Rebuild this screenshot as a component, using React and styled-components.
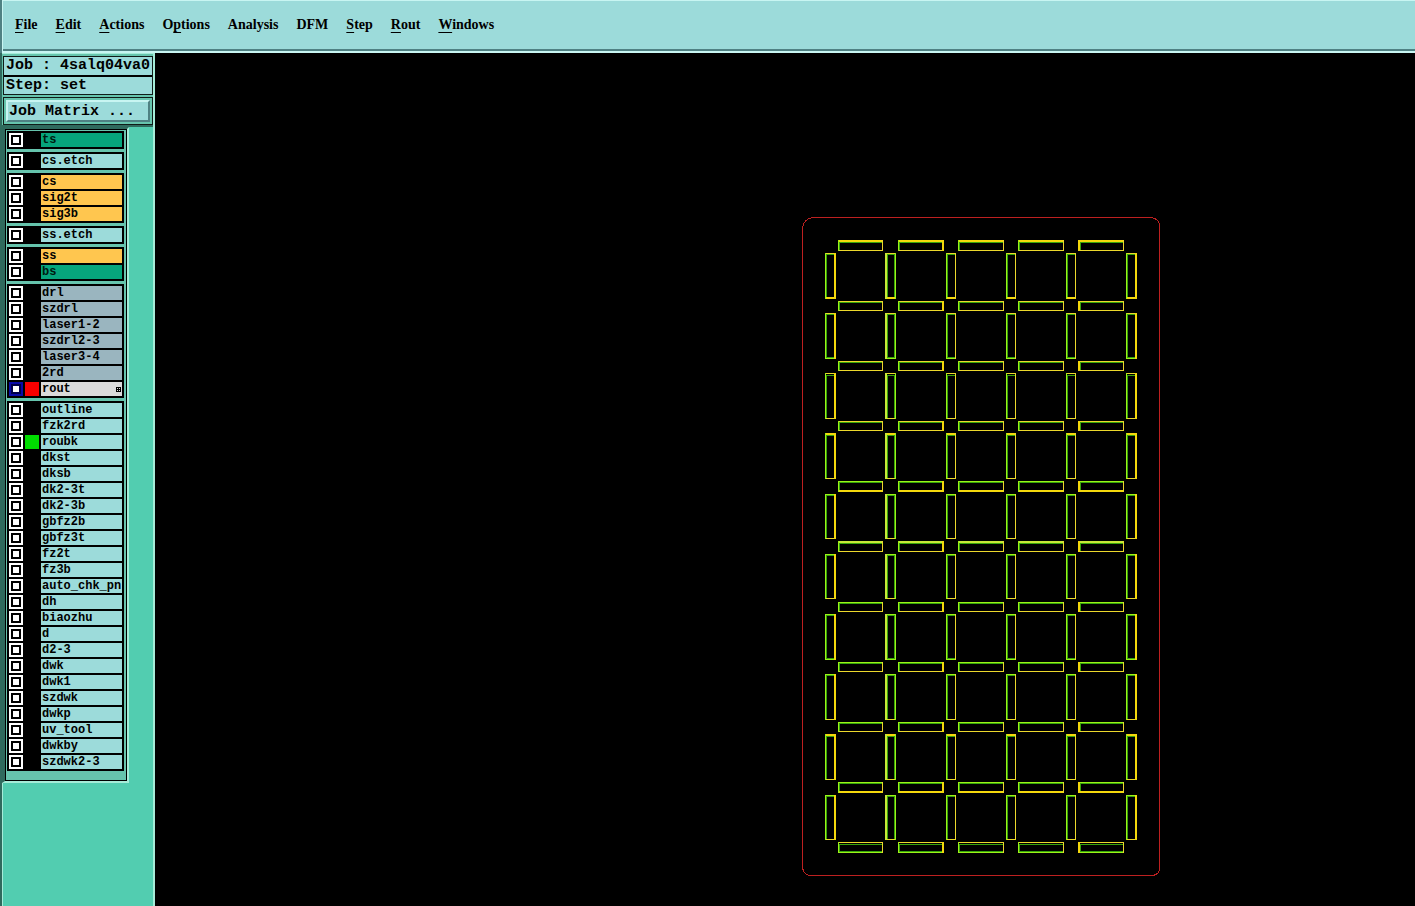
import React from "react";
import styled, { createGlobalStyle } from "styled-components";

const C = {
  aqua: "#9cdbda",
  light: "#c8f5f2",
  shade: "#4f8183",
  teal: "#52cdb0",
  tealLight: "#a5ecd8",
  tealFrame: "#66c4ad",
  tealDark: "#2f6a5d",
};

const GlobalStyle = createGlobalStyle`
  *, *::before { box-sizing: border-box; }
  body { margin: 0; background: #000; color: #000; }
  button, input { font: inherit; color: inherit; margin: 0; }
`;

const Page = styled.div`
  min-height: 100vh;
  display: flex;
  flex-direction: column;
`;

const MenuBar = styled.nav`
  display: flex;
  align-items: flex-start;
  gap: 18px;
  height: 53px;
  margin-left: 2px;
  padding: 15px 12px 0 12px;
  background: ${C.aqua};
  border-top: 1px solid ${C.light};
  border-left: 1px solid ${C.light};
  border-bottom: 2px solid ${C.light};
  box-shadow: inset 0 -2px ${C.shade}, -2px 0 ${C.shade};
`;

const MenuItem = styled.button`
  padding: 0;
  border: 0;
  background: none;
  font: bold 14px/17px "Liberation Serif", serif;
  white-space: nowrap;

  u {
    text-decoration-thickness: 1px;
    text-underline-offset: 3px;
    text-decoration-skip-ink: none;
  }
`;

const Workspace = styled.div`
  flex: 1;
  display: flex;
  align-items: stretch;
`;

const Sidebar = styled.aside`
  flex: none;
  width: 155px;
  background: ${C.teal};
  border-left: 2px solid ${C.tealDark};
  border-right: 2px solid ${C.tealLight};
  box-shadow: inset 1px 0 ${C.tealLight};
`;

const JobPanel = styled.header`
  height: 74px;
  padding: 2px 0 0 1px;
  background: ${C.tealFrame};
  border-top: 1px solid ${C.tealLight};
  border-bottom: 2px solid ${C.tealDark};
  font: bold 15px/18px "Liberation Mono", monospace;
  white-space: pre;
`;

const JobInfo = styled.dl`
  margin: 0 0 2px;
  background: ${C.aqua};
  border: 1px solid #101c18;
`;

const JobLine = styled.div`
  display: flex;
  height: 18px;
  padding-left: 2px;

  & + & {
    height: 19px;
    border-top: 2px solid #000;
  }

  dt, dd {
    margin: 0;
  }
`;

const ButtonFrame = styled.div`
  padding: 2px;
  border: 1px solid #101c18;
`;

const MatrixButton = styled.button`
  display: block;
  width: 100%;
  height: 22px;
  padding: 1px 1px 0;
  text-align: left;
  background: ${C.aqua};
  border: 2px solid;
  border-color: ${C.light} ${C.shade} ${C.shade} ${C.light};
`;

const LayerPanel = styled.section`
  width: 127px;
  border-left: 3px solid ${C.tealDark};
  border-top: 2px solid ${C.tealDark};
  border-right: 2px solid ${C.tealLight};
  border-bottom: 2px solid ${C.tealLight};
`;

const LayerFrame = styled.div`
  display: flex;
  flex-direction: column;
  gap: 3px;
  padding: 1px 2px 9px 1px;
  background: ${C.tealFrame};
  border: 1px solid #000;
`;

const LayerGroup = styled.ul`
  display: flex;
  flex-direction: column;
  gap: 2px;
  margin: 0;
  padding: 2px;
  list-style: none;
  background: #000;
`;

const LayerRow = styled.li`
  display: flex;
  gap: 2px;
  height: 14px;
`;

const LayerToggle = styled.input`
  appearance: none;
  flex: none;
  display: grid;
  place-items: center;
  width: 14px;
  height: 14px;
  background: #fff;

  &::before {
    content: "";
    width: 10px;
    height: 10px;
    background: #fff;
    border: 2px solid #000;
  }

  &:checked {
    background: #0a0aa8;
  }

  &:checked::before {
    border-color: #00004a;
  }
`;

const Swatch = styled.span`
  flex: none;
  width: 14px;
  background: ${(p) => p.$color || "#000"};
`;

const tones = {
  mask: "#06a57c",
  board: C.aqua,
  signal: "#ffc64f",
  drill: "#9ab5bf",
  active: "#dadada",
};

const LayerName = styled.label`
  flex: 1;
  min-width: 0;
  display: flex;
  align-items: center;
  justify-content: space-between;
  padding: 0 1px;
  overflow: hidden;
  background: ${(p) => tones[p.$tone]};
  color: ${(p) => (p.$tone === "mask" ? "#001a10" : "#000")};
  font: bold 12px/14px "Liberation Mono", monospace;
  white-space: nowrap;
`;

const Canvas = styled.main`
  flex: 1;
  min-width: 0;
  background: #000;

  svg {
    display: block;
    width: 100%;
    height: auto;
  }
`;

const menus = [
  ["", "F", "ile"],
  ["", "E", "dit"],
  ["", "A", "ctions"],
  ["O", "p", "tions"],
  ["Analysis"],
  ["DFM"],
  ["", "S", "tep"],
  ["", "R", "out"],
  ["", "W", "indows"],
];

const groups = [
  [["ts", "mask"]],
  [["cs.etch", "board"]],
  [["cs", "signal"], ["sig2t", "signal"], ["sig3b", "signal"]],
  [["ss.etch", "board"]],
  [["ss", "signal"], ["bs", "mask"]],
  [
    ["drl", "drill"],
    ["szdrl", "drill"],
    ["laser1-2", "drill"],
    ["szdrl2-3", "drill"],
    ["laser3-4", "drill"],
    ["2rd", "drill"],
    ["rout", "active", "#f80000"],
  ],
  [
    "outline", "fzk2rd", "roubk", "dkst", "dksb", "dk2-3t", "dk2-3b", "gbfz2b",
    "gbfz3t", "fz2t", "fz3b", "auto_chk_pnl", "dh", "biaozhu", "d", "d2-3",
    "dwk", "dwk1", "szdwk", "dwkp", "uv_tool", "dwkby", "szdwk2-3",
  ].map((n) => [n, "board", n === "roubk" ? "#00dd00" : undefined]),
];

const YELLOW = "#ecd82c";
const GOLD = "#f4d80c";
const LIME = "#9cf218";
const PALE = "#c8e838";
const GREEN = "#38a40a";

// Slots between the boards: [start, length, style of the first edge, style of the last edge]
const barCols = [
  [838, 45], [898, 46, "", "gold"], [958, 46], [1018, 46], [1078, 46, "gold", ""],
];
const barRows = [
  [240, 11, "gold"], [301, 10], [361, 10], [421, 10], [481, 11, "lime", "gold"],
  [541, 11, "pale"], [602, 10, "lime"], [662, 10, "lime"], [722, 10, "lime"],
  [782, 11, "lime", "gold"], [842, 11, "split", "green"],
];
const postCols = [
  [825, 11, "", "gold"], [885, 11, "pale", "lime"], [946, 10], [1006, 10],
  [1066, 10], [1126, 11, "", "gold"],
];
const postRows = [
  [253, 46, "", "gold"], [313, 46, "", "green"], [373, 46, "split"],
  [433, 46, "gold"], [494, 45, "lime"], [554, 45, "lime"],
  [614, 46, "lime", "green"], [674, 46, "lime"], [734, 46, "gold"], [795, 45, "lime"],
];

function Slot({ col, row }) {
  const [x, w, left, right] = col;
  const [y, h, top, bottom] = row;
  const r = x + w;
  const b = y + h;
  const wide = (s) => s === "gold" || s === "pale";
  const tint = (s) =>
    s === "gold" ? GOLD : s === "pale" ? PALE : s === "lime" || s === "green" ? LIME : YELLOW;
  const topEdge = wide(top) ? 2 : 1;
  const leftEdge = wide(left) ? 2 : 1;
  const innerTop = top === "split" ? y + 2 : y + topEdge;
  return (
    <g>
      <rect x={x + leftEdge} y={innerTop} width={w - leftEdge - 1} height="1" fill={GREEN} />
      <rect x={x + leftEdge} y={innerTop} width="1" height={b - innerTop - 1} fill={GREEN} />
      {right === "lime" && (
        <rect x={r - 2} y={innerTop} width="1" height={b - innerTop - 1} fill={GREEN} />
      )}
      {bottom === "green" && (
        <rect x={x + 1} y={b - 2} width={w - 2} height="1" fill={GREEN} />
      )}
      <rect x={x} y={y} width={w} height={topEdge} fill={tint(top)} />
      <rect x={x} y={b - (bottom === "gold" ? 2 : 1)} width={w} height={bottom === "gold" ? 2 : 1} fill={tint(bottom)} />
      <rect x={x} y={y} width={leftEdge} height={h} fill={left ? tint(left) : LIME} />
      <rect x={r - (right === "gold" ? 2 : 1)} y={y} width={right === "gold" ? 2 : 1} height={h} fill={tint(right)} />
    </g>
  );
}

function BoardDrawing() {
  return (
    <svg viewBox="155 53 1260 853" shapeRendering="crispEdges" role="img" aria-label="Rout layer">
      <path
        d="M812.5 217.5H1150.5Q1159.5 218.5 1159.5 225.5V868.5Q1159.5 873.5 1153.5 875.5H809.5Q803.5 874.5 802.5 867.5V227.5Q803.5 219.5 812.5 217.5Z"
        fill="none"
        stroke="#bd2020"
      />
      {barRows.map((row) => barCols.map((col) => <Slot key={`${row[0]}-${col[0]}`} col={col} row={row} />))}
      {postRows.map((row) => postCols.map((col) => <Slot key={`${row[0]}-${col[0]}`} col={col} row={row} />))}
    </svg>
  );
}

function Layer({ name, tone, color }) {
  const id = `layer-${name}`;
  return (
    <LayerRow>
      <LayerToggle type="checkbox" id={id} defaultChecked={tone === "active"} />
      <Swatch $color={color} />
      <LayerName htmlFor={id} $tone={tone}>
        {name}
        {tone === "active" && (
          <svg width="5" height="5" viewBox="0 0 5 5" shapeRendering="crispEdges" aria-hidden="true">
            <path d="M.5 .5h4v4h-4zM2.5 0v5M0 2.5h5" fill="none" stroke="#000" />
          </svg>
        )}
      </LayerName>
    </LayerRow>
  );
}

export default function App() {
  return (
    <Page>
      <GlobalStyle />
      <MenuBar>
        {menus.map(([before, key, after]) => (
          <MenuItem key={before + (key || "") + (after || "")} type="button">
            {before}
            {key && <u>{key}</u>}
            {after}
          </MenuItem>
        ))}
      </MenuBar>
      <Workspace>
        <Sidebar>
          <JobPanel>
            <JobInfo>
              <JobLine>
                <dt>{"Job : "}</dt>
                <dd>4salq04va0</dd>
              </JobLine>
              <JobLine>
                <dt>{"Step: "}</dt>
                <dd>set</dd>
              </JobLine>
            </JobInfo>
            <ButtonFrame>
              <MatrixButton type="button">Job Matrix ...</MatrixButton>
            </ButtonFrame>
          </JobPanel>
          <LayerPanel>
            <LayerFrame>
              {groups.map((group) => (
                <LayerGroup key={group[0][0]}>
                  {group.map(([name, tone, color]) => (
                    <Layer key={name} name={name} tone={tone} color={color} />
                  ))}
                </LayerGroup>
              ))}
            </LayerFrame>
          </LayerPanel>
        </Sidebar>
        <Canvas>
          <BoardDrawing />
        </Canvas>
      </Workspace>
    </Page>
  );
}
